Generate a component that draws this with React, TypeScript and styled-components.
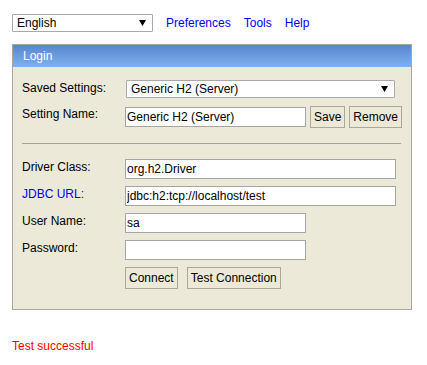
import React from "react";
import styled, {createGlobalStyle} from "styled-components";

const GlobalStyle = createGlobalStyle`
  body {
    margin: 0;
    background: #ffffff;
    font-family: "Liberation Sans", Arial, sans-serif;
    font-size: 12px;
    color: #000000;
  }
`

const Page = styled.div`
  padding: 14px 0 0 12px;
  width: 400px;
`

const TopBar = styled.div`
  display: flex;
  align-items: center;
  gap: 13px;
  height: 18px;
`

const SelectBox = styled.div<{ $width: number, $height: number }>`
  box-sizing: border-box;
  display: flex;
  align-items: center;
  justify-content: space-between;
  width: ${props => props.$width}px;
  height: ${props => props.$height}px;
  padding: 0 6px 0 4px;
  border: 1px solid #a9a9a9;
  border-radius: 1px;
  background: #ffffff;
  font-size: 12px;
  color: #000000;
  cursor: default;
`

const TopLink = styled.a`
  color: #0000ff;
  text-decoration: none;
  font-size: 12px;
  line-height: 14px;
  cursor: pointer;
`

const LinkGroup = styled.div`
  display: flex;
  gap: 13px;
  margin-left: 0;
`

const Panel = styled.div`
  margin-top: 12px;
  width: 400px;
  box-sizing: border-box;
  border: 1px solid #aca899;
  background: #ece9d8;
`

const PanelHeader = styled.div`
  height: 22px;
  line-height: 22px;
  padding-left: 10px;
  color: #ffffff;
  font-size: 12px;
  background: linear-gradient(to bottom, #5985cf, #7db2f0);
`

const PanelBody = styled.div`
  padding: 13px 10px 20px 9px;
`

const Section = styled.div<{ $gap: number }>`
  display: flex;
  flex-direction: column;
  gap: ${props => props.$gap}px;
`

const Row = styled.div`
  display: flex;
  align-items: flex-start;
`

const Label = styled.div<{ $link?: boolean }>`
  width: 103px;
  flex-shrink: 0;
  line-height: 14px;
  padding-top: 1px;
  color: ${props => props.$link ? '#0000ff' : '#000000'};
`

const Field = styled.div<{ $first?: boolean }>`
  display: flex;
  align-items: center;
  gap: 4px;
  margin-left: ${props => props.$first ? '1px' : '0'};
`

const TextInput = styled.input<{ $width: number }>`
  box-sizing: border-box;
  width: ${props => props.$width}px;
  height: 20px;
  margin: 0;
  padding: 0 1px;
  border: 1px solid #a5a5a5;
  background: #ffffff;
  font-family: "Liberation Sans", Arial, sans-serif;
  font-size: 12px;
  color: #000000;
  outline: none;
`

const Button = styled.button`
  box-sizing: border-box;
  height: 22px;
  margin: 0;
  padding: 0 3px;
  border: 1px solid #aca899;
  background: #ece9d8;
  font-family: "Liberation Sans", Arial, sans-serif;
  font-size: 12px;
  color: #000000;
  cursor: pointer;
`

const ButtonRow = styled.div`
  display: flex;
  gap: 9px;
  margin-left: 103px;
`

const Divider = styled.div`
  height: 1px;
  margin: 15px 0;
  background: #a5a294;
`

const Status = styled.div`
  margin-top: 29px;
  color: #ff0000;
  font-size: 12px;
  line-height: 14px;
`

const Arrow: React.FC = () => (
  <svg width="7" height="6" viewBox="0 0 7 6">
    <path d="M0 0H7L3.5 6Z" fill="#000000"/>
  </svg>
)

const App: React.FC = () => {
  return (
    <Page>
      <GlobalStyle/>
      <TopBar>
        <SelectBox $width={141} $height={18}>
          <span>English</span>
          <Arrow/>
        </SelectBox>
        <LinkGroup>
          <TopLink>Preferences</TopLink>
          <TopLink>Tools</TopLink>
          <TopLink>Help</TopLink>
        </LinkGroup>
      </TopBar>

      <Panel>
        <PanelHeader>Login</PanelHeader>
        <PanelBody>
          <Section $gap={8}>
            <Row>
              <Label>Saved Settings:</Label>
              <Field $first>
                <SelectBox $width={269} $height={18}>
                  <span>Generic H2 (Server)</span>
                  <Arrow/>
                </SelectBox>
              </Field>
            </Row>
            <Row>
              <Label>Setting Name:</Label>
              <Field>
                <TextInput $width={181} defaultValue="Generic H2 (Server)"/>
                <Button>Save</Button>
                <Button>Remove</Button>
              </Field>
            </Row>
          </Section>

          <Divider/>

          <Section $gap={7}>
            <Row>
              <Label>Driver Class:</Label>
              <TextInput $width={271} defaultValue="org.h2.Driver"/>
            </Row>
            <Row>
              <Label $link>JDBC URL:</Label>
              <TextInput $width={271} defaultValue="jdbc:h2:tcp://localhost/test"/>
            </Row>
            <Row>
              <Label>User Name:</Label>
              <TextInput $width={181} defaultValue="sa"/>
            </Row>
            <Row>
              <Label>Password:</Label>
              <TextInput $width={181} type="password" defaultValue=""/>
            </Row>
            <ButtonRow>
              <Button>Connect</Button>
              <Button>Test Connection</Button>
            </ButtonRow>
          </Section>
        </PanelBody>
      </Panel>

      <Status>Test successful</Status>
    </Page>
  )
}

export default App;
